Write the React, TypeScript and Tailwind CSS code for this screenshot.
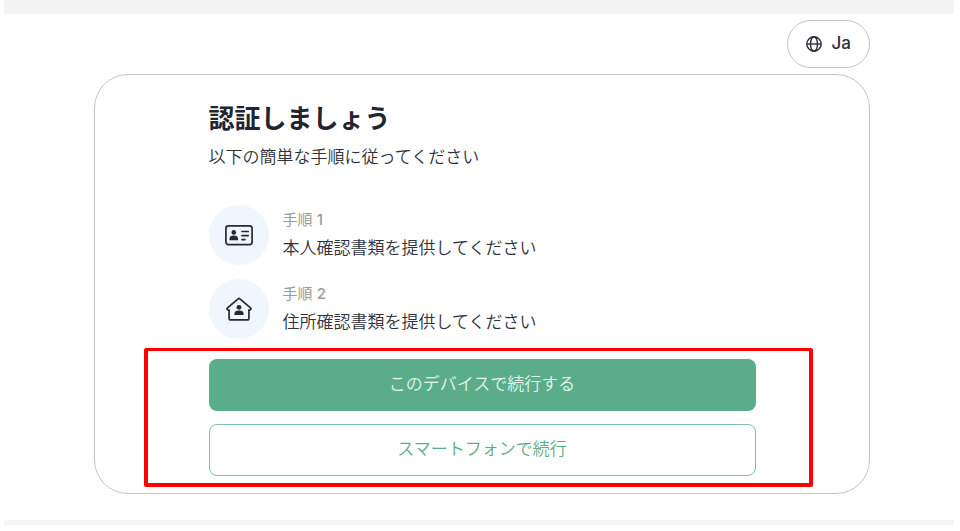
import type { ReactNode } from "react";

interface Step {
	id: number;
	title: string;
	icon: ReactNode;
}

const GlobeIcon = () => (
	<svg
		className="h-4 w-4"
		viewBox="0 0 16 16"
		fill="none"
		stroke="currentColor"
		strokeWidth={1.4}
		aria-hidden="true"
	>
		<circle cx="8" cy="8" r="7.2" />
		<ellipse cx="8" cy="8" rx="3.5" ry="7.2" />
		<path d="M0.8 8h14.4" />
	</svg>
);

const IdCardIcon = () => (
	<svg
		className="h-6 w-7"
		viewBox="0 0 28 24"
		fill="none"
		stroke="currentColor"
		strokeWidth={1.7}
		strokeLinecap="round"
		aria-hidden="true"
	>
		<rect x="0.9" y="2.9" width="26.2" height="18.8" rx="2.6" />
		<path d="M17 8.5h6.2M17 12.6h6.2M17 16.6h3" />
		<g fill="currentColor" stroke="none">
			<circle cx="8.8" cy="9.4" r="2.3" />
			<path d="M4.5 17.2v-1.5c0-2 1.6-3.2 4.3-3.2s4.3 1.2 4.3 3.2v1.5z" />
		</g>
	</svg>
);

const HouseIcon = () => (
	<svg
		className="h-6 w-7"
		viewBox="0 0 28 24"
		fill="none"
		stroke="currentColor"
		strokeWidth={1.7}
		strokeLinejoin="round"
		aria-hidden="true"
	>
		<path d="M13.1 1.9Q14 1.1 14.9 1.9L25.5 10.9Q26.4 11.8 25.6 12.6T23.9 13V21.2Q23.9 22.9 22.2 22.9H5.8Q4.1 22.9 4.1 21.2V13Q3.2 13.4 2.4 12.6T2.5 10.9Z" />
		<g fill="currentColor" stroke="none">
			<circle cx="14" cy="10.3" r="2.4" />
			<path d="M9.4 18v-1.3c0-1.9 1.7-3.1 4.6-3.1s4.6 1.2 4.6 3.1V18z" />
		</g>
	</svg>
);

const steps: Step[] = [
	{
		id: 1,
		title: "本人確認書類を提供してください",
		icon: <IdCardIcon />,
	},
	{
		id: 2,
		title: "住所確認書類を提供してください",
		icon: <HouseIcon />,
	},
];

const StepRow = ({ step }: { step: Step }) => (
	<li className="flex items-center gap-3.5">
		<span className="flex h-[60px] w-[60px] shrink-0 items-center justify-center rounded-full bg-[#f1f5fd] text-[#262a35]">
			{step.icon}
		</span>
		<div className="flex flex-col gap-1.5">
			<span className="text-[15px] leading-5 text-[#9b9b9b]">
				手順 <span className="font-medium">{step.id}</span>
			</span>
			<span className="text-[17px] leading-6 font-[350] text-[#2f323d]">
				{step.title}
			</span>
		</div>
	</li>
);

export default function App() {
	return (
		<div
			className="min-h-screen bg-white pl-1 font-['Inter','Noto_Sans_CJK_JP',sans-serif]"
			lang="ja"
		>
			<div className="mr-1.5 h-3.5 bg-[#f4f4f4]" />

			<main className="mx-auto flex w-full max-w-[776px] flex-col pt-1.5 pb-[26px]">
				<button
					type="button"
					className="flex h-12 items-center gap-2.5 self-end rounded-full border border-[#c4c4c4] px-[18px] text-[17px] font-medium text-[#2b2e3a]"
				>
					<GlobeIcon />
					Ja
				</button>

				<section className="mt-1.5 rounded-[34px] border border-[#c4c4c4] px-6 pt-[26px] pb-[17px]">
					<div className="mx-auto max-w-[547px]">
						<h1 className="text-[26px] leading-9 font-semibold text-[#22252f]">
							認証しましょう
						</h1>
						<p className="mt-2 text-[17px] leading-6 font-[350] text-[#2f323d]">
							以下の簡単な手順に従ってください
						</p>

						<ol className="mt-9 flex flex-col gap-3.5">
							{steps.map((step) => (
								<StepRow key={step.id} step={step} />
							))}
						</ol>

						<div className="relative mt-5 flex flex-col gap-[13px]">
							<button
								type="button"
								className="h-[52px] rounded-lg bg-[#5bac89] text-[17px] font-[350] text-[#e4f5ec]"
							>
								このデバイスで続行する
							</button>
							<button
								type="button"
								className="h-[52px] rounded-lg border border-[#7fc0a3] text-[17px] font-[350] text-[#5bac89]"
							>
								スマートフォンで続行
							</button>
							{/* Highlight around both actions */}
							<div className="pointer-events-none absolute -top-[11px] -right-[57px] -bottom-[11px] -left-[65px] rounded-xs border-x-4 border-t-3 border-b-4 border-[#ff0000]" />
						</div>
					</div>
				</section>
			</main>

			<div className="mr-1.5 h-[5px] bg-[#f4f4f4]" />
		</div>
	);
}
